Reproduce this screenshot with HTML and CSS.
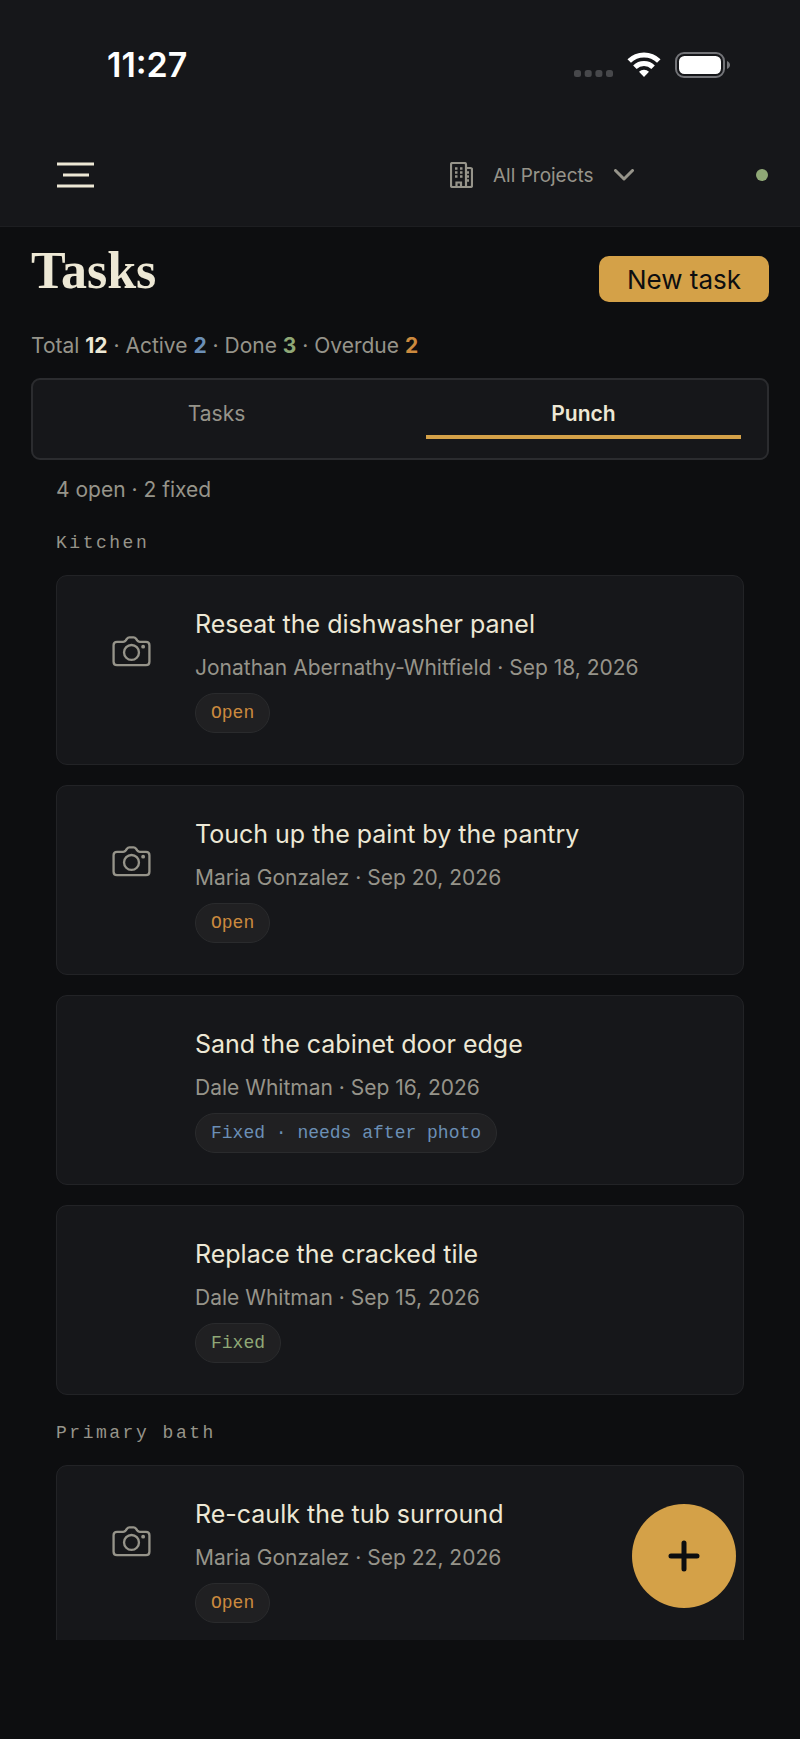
FILE: index.html
```html
<!DOCTYPE html>
<html lang="en">
<head>
    <meta charset="UTF-8">
    <meta name="viewport" content="width=device-width, initial-scale=1.0">
    <title>Tasks</title>
    <link rel="stylesheet" href="styles.css">
</head>
<body>
    <!-- Shared icons -->
    <svg class="sprite" aria-hidden="true">
        <symbol id="camera" viewBox="0 0 40 32">
            <path d="M5 6h6.500c1.200 0 1.800-.4 2.500-1.300l1.300-1.800c.7-.9 1.400-1.400 2.500-1.400h4.400c1.100 0 1.800.5 2.500 1.400L26 4.700c.7.900 1.300 1.300 2.500 1.300H35c2.400 0 3.500 1.200 3.500 3.500v17c0 2.300-1.100 3.500-3.500 3.500H5c-2.400 0-3.500-1.200-3.500-3.500v-17C1.500 7.200 2.600 6 5 6z" fill="none" stroke="currentColor" stroke-width="2.400"/>
            <circle cx="20" cy="17" r="7.700" fill="none" stroke="currentColor" stroke-width="2.400"/>
            <circle cx="32" cy="11" r="2" fill="currentColor"/>
        </symbol>
    </svg>

    <header class="topbar">
        <div class="status">
            <span class="time">11:27</span>
            <div class="status-icons">
                <svg width="39" height="26" viewBox="0 0 39 26" fill="#47484b">
                    <rect x="0" y="18" width="7" height="7" rx="2.500"/>
                    <rect x="10.700" y="18" width="7" height="7" rx="2.500"/>
                    <rect x="21.400" y="18" width="7" height="7" rx="2.500"/>
                    <rect x="32" y="18" width="7" height="7" rx="2.500"/>
                </svg>
                <svg width="34" height="26" viewBox="0 0 34 26" fill="none" stroke="#fff" stroke-width="5">
                    <path d="M2.200 9a21 21 0 0 1 29.600 0"/>
                    <path d="M7.900 15.200a13 13 0 0 1 18.200 0"/>
                    <path d="M17 25l-5-5.300a7.500 7.500 0 0 1 10 0z" fill="#fff" stroke="none"/>
                </svg>
                <svg width="55" height="26" viewBox="0 0 55 26">
                    <rect x="1" y="1" width="48" height="24" rx="8" fill="none" stroke="#737478" stroke-width="2"/>
                    <rect x="4" y="4" width="42" height="18" rx="5.500" fill="#fff"/>
                    <path d="M52 9c4 1.500 4 6.500 0 8z" fill="#737478"/>
                </svg>
            </div>
        </div>
        <nav class="nav">
            <button class="menu-btn" aria-label="Menu">
                <svg width="37" height="26" viewBox="0 0 37 26" fill="none" stroke="#ede8d5" stroke-width="3">
                    <path d="M0 2h37M6 13h26M0 24h37"/>
                </svg>
            </button>
            <label class="project-picker">
                <svg width="23" height="26" viewBox="0 0 23 26" fill="none" stroke="currentColor" stroke-width="2.200">
                    <path d="M16 25H2.500C1.500 25 1 24.500 1 23.500v-21C1 1.500 1.500 1 2.500 1h12c1 0 1.500.5 1.500 1.500V25h4.500c1 0 1.500-.5 1.500-1.500v-16C22 6.500 21.500 6 20.500 6H16M6.500 25v-4.500h4.500V25"/>
                    <path d="M5 6.500h2.500M10 6.500h2.500M5 10.500h2.500M10 10.500h2.500M5 14.500h2.500M10 14.500h2.500M17 10.500h2M17 14.500h2M17 18.500h2" stroke-width="2.500"/>
                </svg>
                <select class="project-select" aria-label="Project">
                    <option>All Projects</option>
                </select>
                <svg width="20" height="12" viewBox="0 0 20 12" fill="none" stroke="currentColor" stroke-width="3" stroke-linecap="round" stroke-linejoin="round">
                    <path d="M1.500 1.500L10 10l8.500-8.500"/>
                </svg>
            </label>
            <span class="online-dot"></span>
        </nav>
    </header>

    <main class="content">
        <div class="page-head">
            <h1>Tasks</h1>
            <button class="new-btn">New task</button>
        </div>
        <p class="stats">Total <b class="total">12</b> · Active <b class="active">2</b> · Done <b class="done">3</b> · Overdue <b class="overdue">2</b></p>

        <div class="tabs" role="tablist">
            <button class="tab" role="tab" aria-selected="false">Tasks</button>
            <button class="tab selected" role="tab" aria-selected="true">Punch</button>
        </div>

        <div class="punch">
            <p class="summary">4 open · 2 fixed</p>

            <section class="room">
                <h2>Kitchen</h2>
                <article class="card">
                    <div class="thumb"><svg class="camera"><use href="#camera"/></svg></div>
                    <div class="card-body">
                        <h3>Reseat the dishwasher panel</h3>
                        <p class="meta">Jonathan Abernathy-Whitfield · Sep 18, 2026</p>
                        <span class="pill overdue">Open</span>
                    </div>
                </article>
                <article class="card">
                    <div class="thumb"><svg class="camera"><use href="#camera"/></svg></div>
                    <div class="card-body">
                        <h3>Touch up the paint by the pantry</h3>
                        <p class="meta">Maria Gonzalez · Sep 20, 2026</p>
                        <span class="pill overdue">Open</span>
                    </div>
                </article>
                <article class="card">
                    <div class="thumb"></div>
                    <div class="card-body">
                        <h3>Sand the cabinet door edge</h3>
                        <p class="meta">Dale Whitman · Sep 16, 2026</p>
                        <span class="pill active">Fixed · needs after photo</span>
                    </div>
                </article>
                <article class="card">
                    <div class="thumb"></div>
                    <div class="card-body">
                        <h3>Replace the cracked tile</h3>
                        <p class="meta">Dale Whitman · Sep 15, 2026</p>
                        <span class="pill done">Fixed</span>
                    </div>
                </article>
            </section>

            <section class="room">
                <h2>Primary bath</h2>
                <article class="card">
                    <div class="thumb"><svg class="camera"><use href="#camera"/></svg></div>
                    <div class="card-body">
                        <h3>Re-caulk the tub surround</h3>
                        <p class="meta">Maria Gonzalez · Sep 22, 2026</p>
                        <span class="pill overdue">Open</span>
                    </div>
                </article>
            </section>
        </div>
    </main>

    <button class="fab" aria-label="Add">
        <svg width="32" height="32" viewBox="0 0 32 32" fill="none" stroke="#0d0e10" stroke-width="5" stroke-linecap="round">
            <path d="M16 3v26M3 16h26"/>
        </svg>
    </button>
</body>
</html>
```
FILE: styles.css
```css
* {
    box-sizing: border-box;
}
body {
    margin: 0;
    height: 100vh;
    padding-bottom: 99px;
    display: flex;
    flex-direction: column;
    background-color: #0d0e10;
    color: #96948a;
    font-family: Inter, "Liberation Sans", sans-serif;
    font-size: 21px;
}
h1, h2, h3, p {
    margin: 0;
    font-weight: 400;
}
button, select {
    font: inherit;
    color: inherit;
    background: none;
    border: none;
    padding: 0;
    cursor: pointer;
}
svg {
    display: block;
}
.sprite {
    position: absolute;
    width: 0;
    height: 0;
}

/* Header */
.topbar {
    flex: none;
    background-color: #16171a;
    border-bottom: 1px solid #1d1e21;
}
.status {
    display: flex;
    justify-content: space-between;
    align-items: center;
    padding: 45px 70px 38px 107px;
    color: #fff;
}
.time {
    font-size: 34px;
    font-weight: 600;
    line-height: 40px;
}
.status-icons {
    display: flex;
    gap: 14px;
}
.nav {
    display: flex;
    align-items: center;
    height: 103px;
    padding: 0 32px 0 57px;
}
.project-picker {
    display: flex;
    align-items: center;
    gap: 20px;
    margin: 0 122px 0 auto;
}
.project-select {
    appearance: none;
    padding-top: 2px;
    font-size: 19px;
    line-height: 26px;
}
.online-dot {
    width: 12px;
    height: 12px;
    border-radius: 50%;
    background-color: #8fa876;
}

/* Page */
.content {
    flex: 1;
    min-height: 0;
    overflow: hidden;
    padding: 21px 31px 0;
}
.page-head {
    display: flex;
    justify-content: space-between;
    align-items: flex-end;
}
h1 {
    padding-bottom: 8px;
    color: #ede8d5;
    font-family: "Liberation Serif", serif;
    font-size: 52px;
    font-weight: 700;
    line-height: 46px;
}
.new-btn {
    height: 46px;
    padding: 0 28px;
    border-radius: 10px;
    background-color: #d4a148;
    color: #0d0e10;
    font-size: 26px;
}
.stats {
    margin: 31px 0 19px;
    line-height: 26px;
}
.total {
    color: #ede8d5;
}
.active {
    color: #6b8fb5;
}
.done {
    color: #8fa876;
}
.overdue {
    color: #cc8a3e;
}
.tabs {
    display: flex;
    padding-bottom: 19px;
    border: 2px solid #2b2c2f;
    border-radius: 9px;
    background-color: #16171a;
}
.tab {
    flex: 1;
    margin: 0 26px;
    padding: 21px 0 8px;
    border-bottom: 4px solid transparent;
    line-height: 26px;
}
.tab.selected {
    border-color: #d4a148;
    color: #ede8d5;
    font-weight: 600;
}

/* Punch list */
.punch {
    padding: 16px 25px 0;
}
.summary {
    margin-bottom: 27px;
    line-height: 28px;
}
.room {
    display: flex;
    flex-direction: column;
    gap: 20px;
    margin-bottom: 26px;
}
h2 {
    font-family: "Liberation Mono", monospace;
    font-size: 18px;
    line-height: 24px;
    letter-spacing: 0.14em;
}
.card {
    display: flex;
    gap: 20px;
    padding: 31px;
    border: 1px solid #222326;
    border-radius: 11px;
    background-color: #16171a;
}
.thumb {
    display: flex;
    flex: none;
    align-items: center;
    justify-content: center;
    width: 87px;
    height: 88px;
}
.camera {
    width: 39px;
    height: 31px;
}
.card-body {
    min-width: 0;
}
h3 {
    color: #ede8d5;
    font-size: 25px;
    line-height: 34px;
}
.meta {
    margin: 13px 0 11px;
    line-height: 28px;
}
.pill {
    display: block;
    width: fit-content;
    padding: 0 15px;
    border: 1px solid #2a2b2d;
    border-radius: 20px;
    background-color: #202022;
    font-family: "Liberation Mono", monospace;
    font-size: 18px;
    line-height: 38px;
}

.fab {
    position: fixed;
    right: 64px;
    bottom: 131px;
    display: grid;
    place-items: center;
    width: 104px;
    height: 104px;
    border-radius: 50%;
    background-color: #d4a148;
}
```
